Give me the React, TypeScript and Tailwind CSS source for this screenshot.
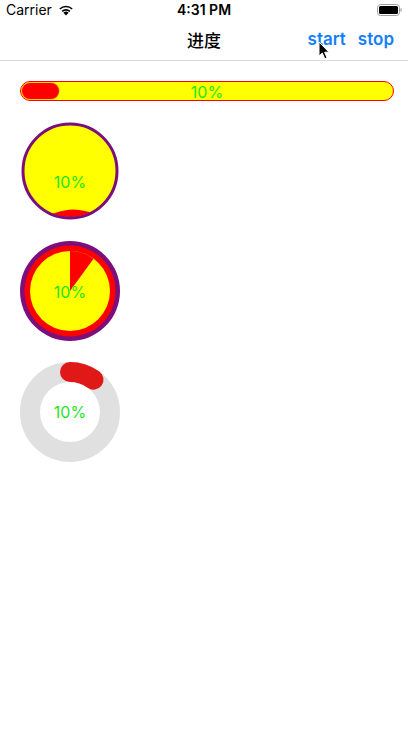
import React from "react";

const font = { fontFamily: "Inter, 'Noto Sans CJK SC', sans-serif" };

function Wifi() {
  return (
    <svg width="16" height="12" viewBox="0 0 16 12">
      <path d="M8 11.5 L5.4 8.7 A3.8 3.8 0 0 1 10.6 8.7 Z" fill="#000" />
      <path d="M3.6 6.8 A6.3 6.3 0 0 1 12.4 6.8 L11.3 8 A4.7 4.7 0 0 0 4.7 8 Z" fill="#000" />
      <path d="M1.3 4.4 A9.5 9.5 0 0 1 14.7 4.4 L13.6 5.6 A7.9 7.9 0 0 0 2.4 5.6 Z" fill="#000" />
    </svg>
  );
}

function Battery() {
  return (
    <svg width="25" height="12" viewBox="0 0 25 12">
      <rect x="0.5" y="0.5" width="22" height="11" rx="3" fill="none" stroke="#a0a0a0" strokeWidth="1" />
      <rect x="2" y="2" width="19" height="8" rx="1.5" fill="#000" />
      <path d="M23.5 4 Q24.8 4 24.8 6 Q24.8 8 23.5 8 Z" fill="#a0a0a0" />
    </svg>
  );
}

function Cursor() {
  return (
    <svg width="13" height="20" viewBox="0 0 13 20" className="absolute left-[318px] top-[41px]">
      <path d="M1 1 L1 15 L4.3 12 L6.8 17.8 L9 16.8 L6.6 11.2 L11 11.2 Z" fill="#000" stroke="#fff" strokeWidth="1" strokeLinejoin="round" />
    </svg>
  );
}

function WaveCircle() {
  return (
    <div className="relative w-[98px] h-[98px] ml-[1px]">
      <svg width="98" height="98" viewBox="0 0 98 98" className="absolute inset-0">
        <defs>
          <clipPath id="c1">
            <circle cx="49" cy="49" r="46" />
          </clipPath>
        </defs>
        <circle cx="49" cy="49" r="47" fill="#ffff00" />
        <g clipPath="url(#c1)">
          <path d="M0 98 L0 96 Q20 96 34 91 Q50 85 64 89 Q75 92 98 93 L98 98 Z" fill="#ff0000" />
        </g>
        <circle cx="49" cy="49" r="47" fill="none" stroke="#7d0f7d" strokeWidth="3" />
      </svg>
      <div className="absolute inset-0 flex items-center justify-center text-[16px] text-[#1ee61e] pt-[22px]" style={font}>
        10%
      </div>
    </div>
  );
}

function PieCircle() {
  const r = 40;
  const a = (36 * Math.PI) / 180;
  const x = 50 + r * Math.sin(a);
  const y = 50 - r * Math.cos(a);
  return (
    <div className="relative w-[100px] h-[100px]">
      <svg width="100" height="100" viewBox="0 0 100 100" className="absolute inset-0">
        <circle cx="50" cy="50" r="50" fill="#7d0f7d" />
        <circle cx="50" cy="50" r="45.5" fill="#ff0000" />
        <circle cx="50" cy="50" r="40" fill="#ffff00" />
        <path d={`M50 50 L50 10 A40 40 0 0 1 ${x} ${y} Z`} fill="#ff0000" />
      </svg>
      <div className="absolute inset-0 flex items-center justify-center text-[16px] text-[#1ee61e] pt-[2px]" style={font}>
        10%
      </div>
    </div>
  );
}

function RingCircle() {
  const r = 40;
  const a = (36 * Math.PI) / 180;
  const x = 50 + r * Math.sin(a);
  const y = 50 - r * Math.cos(a);
  return (
    <div className="relative w-[100px] h-[100px]">
      <svg width="100" height="100" viewBox="0 0 100 100" className="absolute inset-0">
        <circle cx="50" cy="50" r="40" fill="none" stroke="#e0e0e0" strokeWidth="20" />
        <path d={`M50 10 A40 40 0 0 1 ${x} ${y}`} fill="none" stroke="#e01818" strokeWidth="20" strokeLinecap="round" />
      </svg>
      <div className="absolute inset-0 flex items-center justify-center text-[16px] text-[#1ee61e]" style={font}>
        10%
      </div>
    </div>
  );
}

export default function App() {
  return (
    <div className="relative w-[408px] h-[733px] bg-white overflow-hidden" style={font}>
      {/* status bar */}
      <div className="flex items-center h-[20px] px-[6px] text-[14px] text-black">
        <div className="flex items-center gap-[6px] w-[120px]">
          <span className="leading-none">Carrier</span>
          <Wifi />
        </div>
        <div className="flex-1 text-center font-semibold leading-none">4:31 PM</div>
        <div className="w-[120px] flex justify-end">
          <Battery />
        </div>
      </div>
      {/* nav bar */}
      <div className="relative flex items-center justify-center h-[41px] border-b border-[#d9d9d9]">
        <span className="text-[17px] font-medium text-black" style={{ fontFamily: "'Noto Sans CJK SC', sans-serif" }}>
          进度
        </span>
        <div className="absolute right-[14px] top-0 h-full flex items-center gap-[12px] text-[17px] font-semibold text-[#147efb]">
          <span>start</span>
          <span>stop</span>
        </div>
      </div>
      {/* content */}
      <div className="flex flex-col pt-[20px] px-[20px] gap-[21px]">
        <div className="relative h-[20px] w-[374px] rounded-full border border-[#ff0000] bg-[#ffff00]">
          <div className="absolute left-[1px] top-[1px] h-[16px] w-[37px] rounded-full bg-[#ff0000] ring-1 ring-[#ff9900]/40" />
          <div className="absolute inset-0 flex items-center justify-center text-[16px] text-[#1ee61e] pt-[1px]">10%</div>
        </div>
        <WaveCircle />
        <PieCircle />
        <RingCircle />
      </div>
      <Cursor />
    </div>
  );
}
